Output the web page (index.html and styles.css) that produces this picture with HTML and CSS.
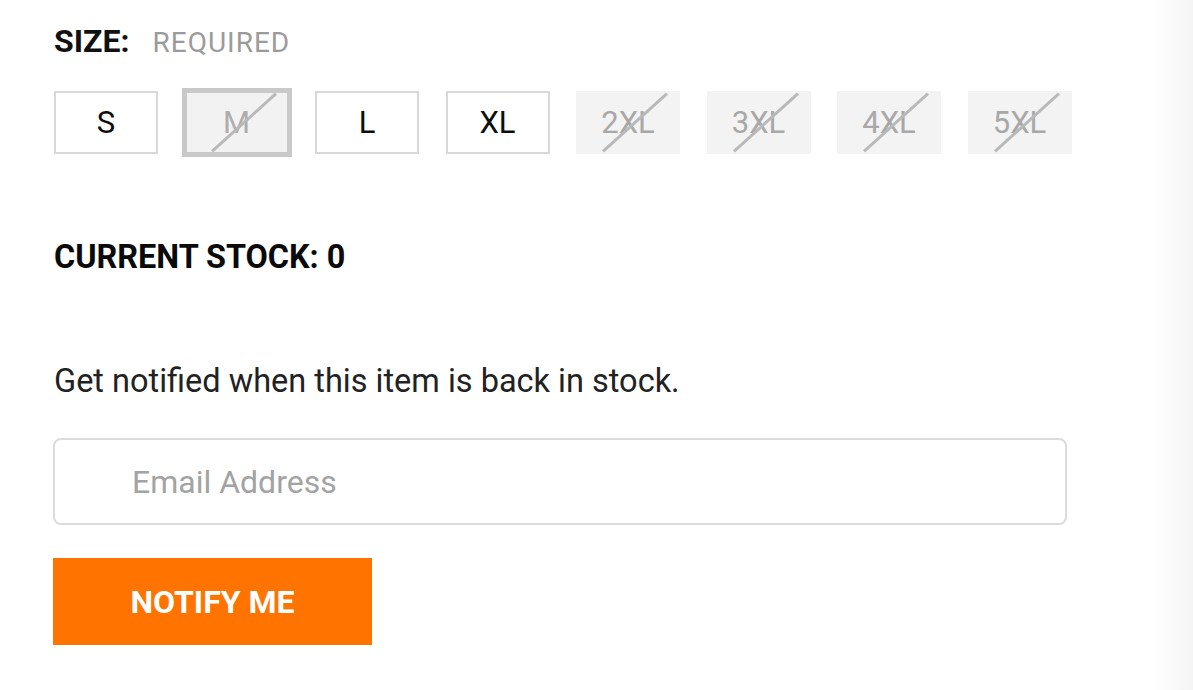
FILE: index.html
```html
<!DOCTYPE html>
<html lang="en">
	<head>
		<meta charset="utf-8" />
		<title>Size and stock</title>
		<meta name="viewport" content="width=device-width, initial-scale=1.0" />
		<link rel="stylesheet" href="styles.css">
	</head>
	<body>
		<div class="wrap">
			<div class="size-head">
				<span class="size-title">SIZE:</span>
				<span class="size-req">REQUIRED</span>
			</div>

			<ul class="sizes">
				<li class="size">S</li>
				<li class="size size-picked out">M</li>
				<li class="size">L</li>
				<li class="size">XL</li>
				<li class="size size-off out">2XL</li>
				<li class="size size-off out">3XL</li>
				<li class="size size-off out">4XL</li>
				<li class="size size-off out">5XL</li>
			</ul>

			<p class="stock">CURRENT STOCK: 0</p>

			<p class="notify-text">Get notified when this item is back in stock.</p>

			<form class="notify">
				<input class="email" type="email" placeholder="Email Address" />
				<button class="notify-btn" type="button">NOTIFY ME</button>
			</form>
		</div>
	</body>
</html>
```

FILE: styles.css
```css
html, body { margin: 0; height: 100%; }
body { font-family: Roboto, "Liberation Sans", sans-serif; color: #111;
	background: linear-gradient(to right, #fff 0, #fff calc(100% - 40px), #f4f4f4 100%); }

.wrap { padding: 22px 0 0 54px; }

.size-head { display: flex; align-items: baseline; gap: 23px; height: 38px; line-height: 38px; }
.size-title { font-size: 32px; font-weight: 700; }
.size-req { font-size: 28px; color: #9b9b9b; letter-spacing: 1px; }

.sizes { list-style: none; margin: 31px 0 0; padding: 0; display: flex; gap: 26.5px; }
.size { position: relative; box-sizing: border-box; width: 104px; height: 63px; border: 2px solid #d8d8d8;
	display: flex; align-items: center; justify-content: center; font-size: 31px; color: #0d0d0d; }
.size-picked { border-color: #c9c9c9; box-shadow: 0 0 0 3px #c9c9c9; background: #f2f2f2; color: #adadad; }
.size-off { border-color: #f3f3f3; background: #f3f3f3; color: #a8a8a8; }
/* crossed out sizes */
.out::after { content: ""; position: absolute; left: 14px; top: 27.5px; width: 86px; height: 3px;
	background: #b9b9b9; transform: rotate(-42deg); }

.stock { margin: 84px 0 0; font-size: 32.4px; line-height: 38px; font-weight: 700; color: #0a0a0a; }

.notify-text { margin: 86px 0 0; font-size: 32.5px; line-height: 38px; color: #222; }

.notify { margin: 38px 0 0 -1px; }
.email { display: block; box-sizing: border-box; width: 1014px; height: 87px; border: 2px solid #dcdcdc;
	border-radius: 8px; padding: 0 0 0 77px; font-family: inherit; font-size: 32px; color: #111; outline: none; }
.email::placeholder { color: #a3a3a3; }
.notify-btn { display: block; margin-top: 33px; width: 319px; height: 87px; border: none; background: #ff7300;
	color: #fff; font-family: inherit; font-size: 32px; font-weight: 700; cursor: pointer; }
```
